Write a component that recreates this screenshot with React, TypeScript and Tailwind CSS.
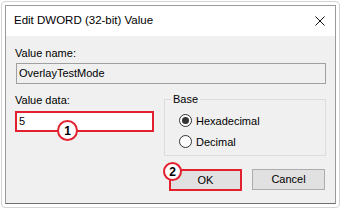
import React from 'react';

const font = { fontFamily: '"Liberation Sans", Arial, sans-serif' };

function Radio({ checked, label }: { checked?: boolean; label: string }) {
  return (
    <div className="flex items-center h-[21px]">
      <span className="w-[13px] h-[13px] rounded-full border border-[#333333] bg-white flex items-center justify-center">
        {checked && <span className="w-[7px] h-[7px] rounded-full bg-[#333333]" />}
      </span>
      <span className="ml-[4px] text-[11px] leading-[14px] text-black">{label}</span>
    </div>
  );
}

function Badge({ n, className }: { n: string; className: string }) {
  return (
    <div
      className={`absolute rounded-full bg-white border-2 border-[#e3202e] flex items-center justify-center text-[12px] font-bold text-black ${className}`}
    >
      {n}
    </div>
  );
}

export default function App() {
  return (
    <div className="w-[341px] h-[209px] bg-white pt-[1px] pl-[1px]" style={font}>
      <div className="w-[339px] h-[207px] border border-[#d4d4d4] rounded-[4px] pt-[3px] pl-[3px]">
        <div className="w-[331px] h-[199px] border border-[#9a9a9a] border-b-[#6f6f6f] flex flex-col">
          {/* title bar */}
          <div className="h-[30px] bg-white flex items-center justify-between pl-[8px] pr-[9px]">
            <span className="text-[11.5px] text-black">Edit DWORD (32-bit) Value</span>
            <svg width="10" height="10" viewBox="0 0 10 10" className="mr-[1px]">
              <path d="M0.5 0.5 L9.5 9.5 M9.5 0.5 L0.5 9.5" stroke="#111" strokeWidth="1" fill="none" />
            </svg>
          </div>

          {/* body */}
          <div className="flex-1 bg-[#f0f0f0] pt-[10px] pl-[9px] pr-[9px]">
            <div className="text-[11px] leading-[14px] text-black">Value name:</div>
            <div className="mt-[3px] ml-[1px] w-[310px] h-[21px] border border-[#a0a0a0] bg-[#f0f0f0] flex items-center pl-[2px] text-[11px] text-black">
              OverlayTestMode
            </div>

            <div className="mt-[8px] flex">
              <div className="w-[139px] pt-[1px]">
                <div className="text-[11px] leading-[14px] text-black">Value data:</div>
                <div className="relative mt-[4px] w-[139px] h-[21px] border-2 border-[#e3202e] bg-white flex items-center pl-[2px] text-[11px] text-black">
                  5
                  <Badge n="1" className="left-[40px] top-[7px] w-[21px] h-[21px]" />
                </div>
              </div>

              <fieldset className="ml-[10px] w-[163px] h-[64px] border border-[#dcdcdc] pl-[14px]">
                <legend className="ml-[-8px] px-[2px] text-[11px] leading-[14px] text-black">Base</legend>
                <div className="mt-[4px]">
                  <Radio checked label="Hexadecimal" />
                  <Radio label="Decimal" />
                </div>
              </fieldset>
            </div>

            <div className="mt-[13px] flex justify-end pr-[1px] gap-[10px]">
              <div className="relative w-[73px] h-[22px] border-2 border-[#e3202e] bg-[#e1e1e1] flex items-center justify-center text-[11px] text-black">
                OK
                <Badge n="2" className="left-[-8px] top-[-9px] w-[19px] h-[19px]" />
              </div>
              <div className="w-[73px] h-[21px] border border-[#adadad] bg-[#e1e1e1] flex items-center justify-center text-[11px] text-black">
                Cancel
              </div>
            </div>
          </div>
        </div>
      </div>
    </div>
  );
}
